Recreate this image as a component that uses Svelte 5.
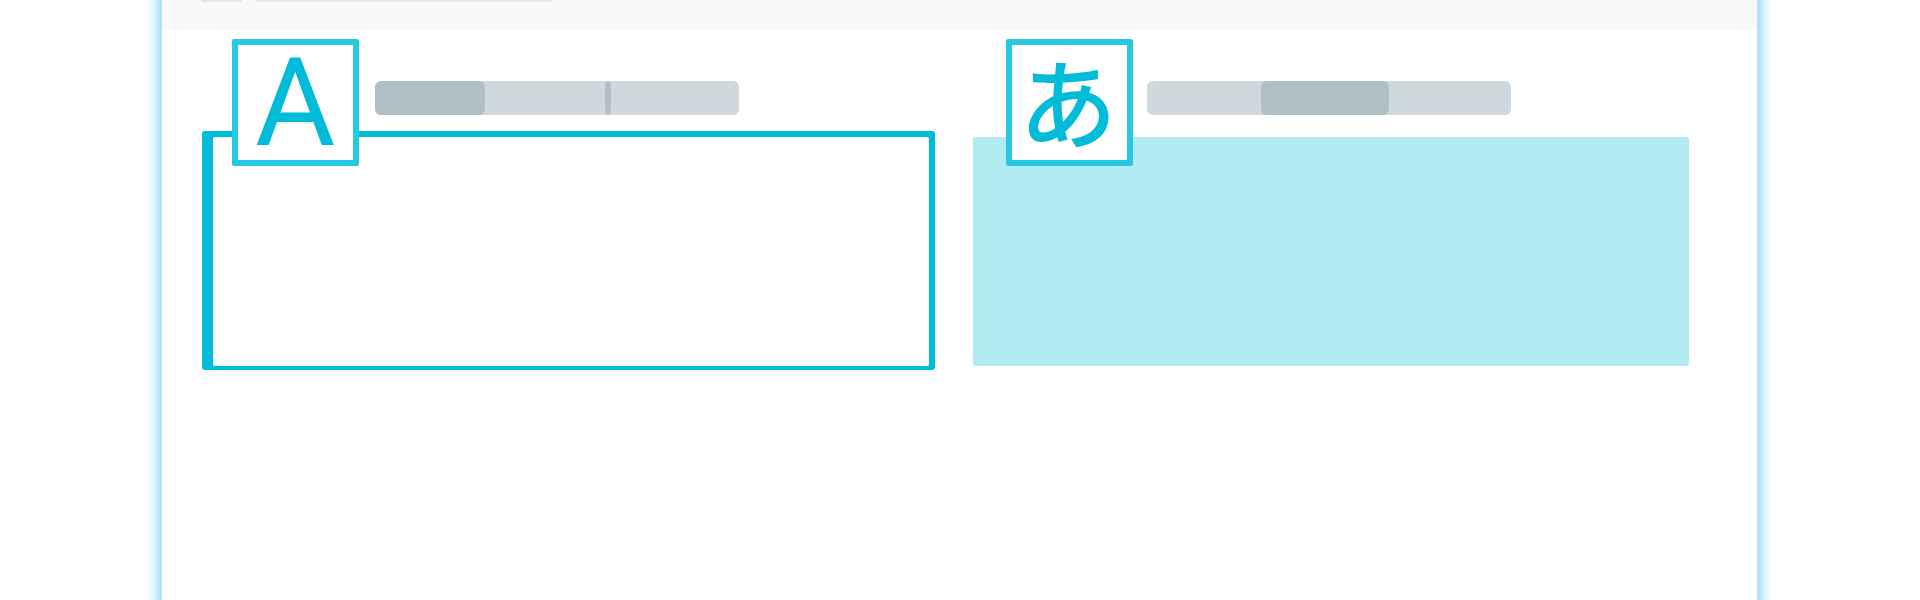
<script>
  const panels = [
    { glyph: 'A', selected: true, thumbs: [{ left: 0, width: 110 }, { left: 229.5, width: 6, pill: true }] },
    { glyph: 'あ', selected: false, thumbs: [{ left: 114, width: 128 }] }
  ];
</script>

<div class="page">
  <div class="glow left"></div>
  <main class="frame">
    <header class="toolbar">
      <span class="chip"></span>
      <span class="field"></span>
    </header>
    <section class="panels">
      {#each panels as p}
        <article class="panel" class:selected={p.selected}>
          <div class="tile">{p.glyph}</div>
          <div class="track">
            {#each p.thumbs as t}
              <span class="thumb" class:pill={t.pill} style="left:{t.left}px;width:{t.width}px"></span>
            {/each}
          </div>
        </article>
      {/each}
    </section>
  </main>
  <div class="glow right"></div>
</div>

<style>
  :global(body) { margin: 0; background: #fff; }
  .page { display: flex; height: 600px; overflow: hidden; padding-left: 146px; font-family: "Noto Sans CJK JP", "Liberation Sans", sans-serif; }
  .glow { width: 16px; flex: none; height: 600px; }
  .glow.left { background: linear-gradient(to right, #fff, #dff3ff 50%, #a6dffb 92%, #c4e9fb); }
  .glow.right { background: linear-gradient(to left, #fff, #dff3ff 50%, #a6dffb 92%, #c4e9fb); }
  .frame { width: 1595px; flex: none; background: #fff; }
  .toolbar { height: 30px; background: #f9f9f9; display: flex; gap: 13px; padding-left: 39px; align-items: flex-start; }
  .chip, .field { height: 2px; background: #e6e6e6; border-radius: 0 0 3px 3px; }
  .chip { width: 41px; }
  .field { width: 298px; }
  .panels { display: flex; gap: 44px; padding: 9px 0 0 51px; }
  .panel { width: 716px; height: 327px; position: relative; display: flex; gap: 14px; align-items: flex-start; }
  .panel::after { content: ""; position: absolute; left: 0; right: 0; top: 98px; height: 229px; background: #b2ebf2; border-radius: 2px; }
  .panel.selected { gap: 16px; }
  .panel.selected::before { content: ""; position: absolute; left: -11px; right: -6px; top: 92px; height: 239px; background: #00bcd9; border-radius: 3px; }
  .panel.selected::after { background: #fff; }
  .tile { position: relative; z-index: 1; width: 127px; height: 127px; margin-left: 33px; padding-right: 3px; box-sizing: border-box; border: 6px solid #26c9df; border-radius: 2px; background: #fff; color: #00bcd9; font-size: 98px; font-weight: 500; line-height: 106px; text-align: center; }
  .panel.selected .tile { margin-left: 19px; padding-right: 1px; font-family: Roboto, "Liberation Sans", sans-serif; font-size: 123px; font-weight: 400; line-height: 117px; }
  .track { position: relative; z-index: 1; width: 364px; height: 34px; margin-top: 42px; background: #cfd8dc; border-radius: 6px; }
  .thumb { position: absolute; top: 0; height: 34px; background: #b0bec5; border-radius: 6px; }
  .thumb.pill { border-radius: 3px / 8px; }
</style>
